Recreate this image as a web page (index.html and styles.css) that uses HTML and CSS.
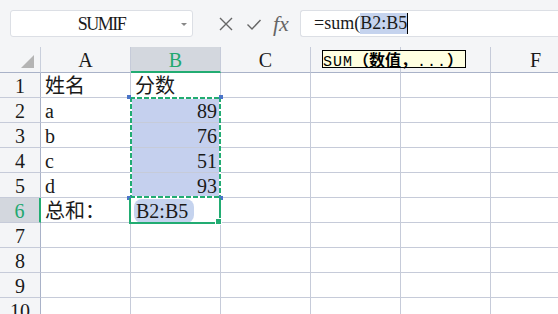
FILE: index.html
```html
<!DOCTYPE html>
<html lang="zh-CN">
<head>
  <meta charset="UTF-8" />
  <title>Sheet</title>
  <link rel="stylesheet" href="styles.css">
</head>
<body>
  <div class="formula-bar">
    <div class="name-box">SUMIF<span class="drop"></span></div>
    <div class="fx-buttons">
      <svg class="icon" width="16" height="16" viewBox="0 0 16 16"><path d="M2 2 L14 14 M14 2 L2 14" stroke="#666" stroke-width="1.4" fill="none"/></svg>
      <svg class="icon" width="16" height="16" viewBox="0 0 16 16"><path d="M1.5 8.5 L6 13 L14.5 4" stroke="#666" stroke-width="1.4" fill="none"/></svg>
      <span class="fx">fx</span>
    </div>
    <div class="formula-input">=sum(<span class="ref">B2:B5</span><span class="caret"></span></div>
  </div>

  <div class="sheet">
    <div class="grid">
      <div class="corner"><span class="tri"></span></div>
      <div class="col-head">A</div>
      <div class="col-head active">B</div>
      <div class="col-head">C</div>
      <div class="col-head">D</div>
      <div class="col-head">E</div>
      <div class="col-head">F</div>

      <div class="row-head">1</div>
      <div class="cell">姓名</div>
      <div class="cell">分数</div>
      <div class="cell"></div><div class="cell"></div><div class="cell"></div><div class="cell"></div>

      <div class="row-head">2</div>
      <div class="cell">a</div>
      <div class="cell num sel">89</div>
      <div class="cell"></div><div class="cell"></div><div class="cell"></div><div class="cell"></div>

      <div class="row-head">3</div>
      <div class="cell">b</div>
      <div class="cell num sel">76</div>
      <div class="cell"></div><div class="cell"></div><div class="cell"></div><div class="cell"></div>

      <div class="row-head">4</div>
      <div class="cell">c</div>
      <div class="cell num sel">51</div>
      <div class="cell"></div><div class="cell"></div><div class="cell"></div><div class="cell"></div>

      <div class="row-head">5</div>
      <div class="cell">d</div>
      <div class="cell num sel">93</div>
      <div class="cell"></div><div class="cell"></div><div class="cell"></div><div class="cell"></div>

      <div class="row-head active">6</div>
      <div class="cell">总和：</div>
      <div class="cell"><span class="pill">B2:B5</span></div>
      <div class="cell"></div><div class="cell"></div><div class="cell"></div><div class="cell"></div>

      <div class="row-head">7</div>
      <div class="cell"></div><div class="cell"></div><div class="cell"></div><div class="cell"></div><div class="cell"></div><div class="cell"></div>
      <div class="row-head">8</div>
      <div class="cell"></div><div class="cell"></div><div class="cell"></div><div class="cell"></div><div class="cell"></div><div class="cell"></div>
      <div class="row-head">9</div>
      <div class="cell"></div><div class="cell"></div><div class="cell"></div><div class="cell"></div><div class="cell"></div><div class="cell"></div>
      <div class="row-head">10</div>
      <div class="cell"></div><div class="cell"></div><div class="cell"></div><div class="cell"></div><div class="cell"></div><div class="cell"></div>
    </div>

    <!-- copy range marker and active cell -->
    <div class="marquee">
      <span class="dot tl"></span><span class="dot tr"></span>
      <span class="dot bl"></span><span class="dot br"></span>
    </div>
    <div class="active-cell"><span class="handle"></span></div>

    <div class="tip"><u>SUM</u><span class="wide">（数值，</span>...<span class="wide">）</span></div>
  </div>
</body>
</html>
```

FILE: styles.css
```css
body {
  margin: 0;
  width: 558px;
  height: 314px;
  overflow: hidden;
  background: #fff;
  font-family: "Liberation Serif", "Noto Sans CJK SC", serif;
  color: #1a1a1a;
}
.formula-bar {
  height: 47px;
  background: #f4f5f7;
  display: flex;
  align-items: flex-start;
  padding: 10px 0 0 10px;
  box-sizing: border-box;
}
.name-box {
  width: 183px;
  height: 27px;
  box-sizing: border-box;
  background: #fff;
  border: 1px solid #dcdfe5;
  border-radius: 3px;
  font-size: 18px;
  letter-spacing: -1.5px;
  line-height: 26px;
  text-align: center;
  position: relative;
}
.drop {
  position: absolute;
  right: 5px;
  top: 12px;
  border-left: 3px solid transparent;
  border-right: 3px solid transparent;
  border-top: 3px solid #888;
}
.fx-buttons {
  display: flex;
  align-items: center;
  gap: 12px;
  height: 27px;
  padding-left: 25px;
  width: 82px;
}
.fx {
  font-family: "Liberation Serif", serif;
  font-style: italic;
  font-size: 22px;
  color: #666;
  margin-left: -1px;
}
.formula-input {
  flex: 1;
  height: 27px;
  box-sizing: border-box;
  background: #fff;
  border: 1px solid #dcdfe5;
  border-right: none;
  border-radius: 3px 0 0 3px;
  font-size: 18px;
  line-height: 25px;
  padding-left: 13px;
  display: flex;
  align-items: center;
}
.ref {
  background: #c5d3ee;
  line-height: 21px;
}
.caret {
  width: 1px;
  height: 21px;
  background: #000;
}
.sheet {
  position: relative;
}
.grid {
  display: grid;
  grid-template-columns: 41px repeat(6, 90px);
  grid-template-rows: 26px repeat(10, 25px);
}
.grid > div {
  box-sizing: border-box;
  border-right: 1px solid #c6cbd9;
  border-bottom: 1px solid #c6cbd9;
  font-size: 20px;
  line-height: 24px;
  padding-top: 1px;
  white-space: nowrap;
  overflow: hidden;
}
.corner, .col-head, .row-head {
  background: #f4f5f7;
}
.grid > .corner {
  border-right-color: #c9cfdc;
  border-bottom-color: #a9b2c8;
  position: relative;
}
.tri {
  position: absolute;
  right: 6px;
  bottom: 4px;
  border-left: 13px solid transparent;
  border-bottom: 13px solid #b4b4b4;
}
.grid > .col-head {
  text-align: center;
  border-bottom-color: #a9b2c8;
  line-height: 25px;
}
.grid > .col-head.active {
  background: #d3d7de;
  color: #22a86f;
  border-bottom: 2px solid #22ac72;
}
.grid > .row-head {
  text-align: center;
  border-right-color: #a9b2c8;
}
.grid > .row-head.active {
  background: #d3d7de;
  color: #22a86f;
  border-right: 2px solid #22ac72;
}
.cell {
  padding-left: 4px;
}
.grid > .sel {
  background: #c5d0ee;
}
.num {
  text-align: right;
  padding-right: 3px;
}
.pill {
  background: #c5d3ee;
  border-radius: 8px;
  padding: 1px 6px 1px 2px;
  margin-left: -1px;
}
.marquee {
  position: absolute;
  left: 130px;
  top: 50px;
  width: 91px;
  height: 101px;
  background:
    repeating-linear-gradient(90deg, #22ac72 0 5px, #fff 5px 7px) top / 100% 2px no-repeat,
    repeating-linear-gradient(90deg, #22ac72 0 5px, #fff 5px 7px) bottom / 100% 2px no-repeat,
    repeating-linear-gradient(180deg, #22ac72 0 5px, #fff 5px 7px) left / 2px 100% no-repeat,
    repeating-linear-gradient(180deg, #22ac72 0 5px, #fff 5px 7px) right / 2px 100% no-repeat;
}
.dot {
  position: absolute;
  width: 4px;
  height: 4px;
  background: #4a74c8;
}
.tl { left: -3px; top: -2px; }
.tr { right: -2px; top: -2px; }
.bl { left: -3px; bottom: -2px; }
.br { right: -2px; bottom: -2px; }
.active-cell {
  position: absolute;
  left: 129px;
  top: 151px;
  width: 92px;
  height: 26px;
  box-sizing: border-box;
  border: 2px solid #22ac72;
  border-top: none;
}
.handle {
  position: absolute;
  right: -3px;
  bottom: -3px;
  width: 5px;
  height: 5px;
  background: #22ac72;
  border: 1px solid #fff;
}
.tip {
  position: absolute;
  left: 322px;
  top: 3px;
  height: 18px;
  box-sizing: border-box;
  padding: 0 2px 0 0;
  background: #ffffe1;
  border: 1px solid #000;
  font-family: "Liberation Mono", "Noto Sans CJK SC", monospace;
  font-size: 15px;
  line-height: 16px;
  letter-spacing: 1px;
  white-space: nowrap;
  color: #000;
}
.wide {
  font-family: "Noto Sans CJK SC", sans-serif;
  font-size: 16px;
  font-weight: 600;
  letter-spacing: 0;
}
```
